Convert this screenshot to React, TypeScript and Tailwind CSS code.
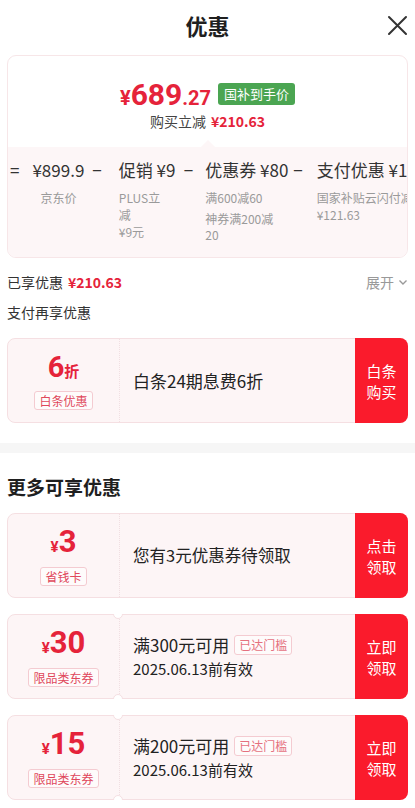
import type { ReactNode } from 'react'

function Tag({ children, className = '' }: { children: ReactNode; className?: string }) {
  return (
    <span
      className={`inline-block rounded-[3px] border border-[#f4cbd1] bg-white/60 px-[4px] text-[12px] leading-[17px] text-[#e0485b] ${className}`}
    >
      {children}
    </span>
  )
}

interface CouponProps {
  left: ReactNode
  middle: ReactNode
  action: [string, string]
  notch?: boolean
}

function Coupon({ left, middle, action, notch }: CouponProps) {
  return (
    <div className="relative mx-[7px] h-[85px] overflow-hidden">
      <div className="flex h-full rounded-[8px] border border-[#f5dfe2] bg-[#fdf5f6]">
        <div className="flex w-[112px] flex-col items-center justify-center gap-[6px] border-r border-dotted border-[#f1dfe2] pt-[2px]">
          {left}
        </div>
        <div className="flex flex-1 flex-col justify-center pl-[13px]">{middle}</div>
        <div className="-my-px -mr-px flex w-[53px] flex-col items-center justify-center rounded-r-[8px] bg-[#fa1b2c] text-[15px] leading-[21px] text-white">
          <span>{action[0]}</span>
          <span>{action[1]}</span>
        </div>
      </div>
      {notch && (
        <>
          <span className="absolute -top-[5px] left-[106px] h-[10px] w-[10px] rounded-full border border-[#f5dfe2] bg-white" />
          <span className="absolute -bottom-[5px] left-[106px] h-[10px] w-[10px] rounded-full border border-[#f5dfe2] bg-white" />
        </>
      )}
    </div>
  )
}

function Amount({ value }: { value: string }) {
  return (
    <div className="flex items-baseline font-['Roboto',sans-serif] font-bold leading-[28px] text-[#e5233a]">
      <span className="text-[15px]">¥</span>
      <span className="text-[31px]">{value}</span>
    </div>
  )
}

function Dash() {
  return <span className="w-[10px] text-center">−</span>
}

export default function App() {
  return (
    <div className="h-[808px] w-[415px] overflow-hidden bg-white font-['Noto_Sans_CJK_SC',sans-serif] text-[#333]">
      {/* header */}
      <div className="relative flex h-[50px] items-center justify-center">
        <span className="text-[22px] font-bold text-[#1f1f1f]">优惠</span>
        <svg className="absolute right-[7px] top-[15px]" width="21" height="21" viewBox="0 0 21 21">
          <path d="M2 2 L19 19 M19 2 L2 19" stroke="#333" strokeWidth="2" strokeLinecap="round" />
        </svg>
      </div>

      {/* price summary card */}
      <div className="mx-[7px] mt-[5px] overflow-hidden rounded-[9px] border border-[#f7e6e8]">
        <div className="flex h-[91px] flex-col items-center pt-[21px]">
          <div className="flex h-[34px] items-center">
            <span className="flex items-baseline font-['Roboto',sans-serif] font-bold text-[#e5233a]">
              <span className="text-[20px]">¥</span>
              <span className="text-[30px]">689</span>
              <span className="text-[20px]">.27</span>
            </span>
            <span className="ml-[7px] rounded-[3px] bg-[#4ba552] px-[6px] text-[13px] leading-[22px] text-white">
              国补到手价
            </span>
          </div>
          <div className="flex h-[20px] items-center text-[14px]">
            <span className="text-[#444]">购买立减</span>
            <span className="ml-[5px] font-semibold text-[#e5233a]">¥210.63</span>
          </div>
        </div>
        <div className="relative h-[110px] bg-[#fdf6f7] pt-[11px]">
          <span className="absolute -top-[5px] left-[195px] h-[10px] w-[10px] rotate-45 bg-[#fdf6f7]" />
          <div className="flex items-start whitespace-nowrap pl-[2px] text-[17px] leading-[24px]">
            <span className="w-[10px] text-center">=</span>
            <div className="ml-[13px] flex w-[52px] flex-col items-center">
              <span>¥899.9</span>
              <span className="mt-[7px] text-[12px] leading-[18px] text-[#9a9a9a]">京东价</span>
            </div>
            <span className="ml-[8px]"><Dash /></span>
            <div className="ml-[17px] flex w-[56px] flex-col">
              <span>促销 ¥9</span>
              <span className="mt-[7px] text-[12px] leading-[17px] text-[#9a9a9a]">
                PLUS立
                <br />
                减
                <br />
                ¥9元
              </span>
            </div>
            <span className="ml-[9px]"><Dash /></span>
            <div className="ml-[12px] flex w-[80px] flex-col">
              <span>优惠券 ¥80</span>
              <span className="mt-[7px] text-[12px] leading-[18px] text-[#9a9a9a]">满600减60</span>
              <span className="mt-[4px] text-[12px] leading-[16px] text-[#9a9a9a]">
                神券满200减
                <br />
                20
              </span>
            </div>
            <span className="ml-[8px]"><Dash /></span>
            <div className="ml-[14px] flex flex-col">
              <span>支付优惠 ¥121.63</span>
              <span className="mt-[7px] text-[12px] leading-[17px] text-[#9a9a9a]">
                国家补贴云闪付减
                <br />
                ¥121.63
              </span>
            </div>
          </div>
        </div>
      </div>

      {/* savings row */}
      <div className="mt-[14px] flex h-[20px] items-center justify-between px-[7px] text-[14px]">
        <div className="flex items-center">
          <span>已享优惠</span>
          <span className="ml-[5px] font-semibold text-[#e5233a]">¥210.63</span>
        </div>
        <div className="flex items-center text-[#999]">
          <span>展开</span>
          <svg className="ml-[4px]" width="10" height="10" viewBox="0 0 10 10">
            <path d="M1.5 3.5 L5 7 L8.5 3.5" stroke="#999" strokeWidth="1.4" fill="none" />
          </svg>
        </div>
      </div>
      <div className="mt-[10px] flex h-[20px] items-center px-[7px] text-[14px]">支付再享优惠</div>

      <div className="mt-[16px]">
        <Coupon
          left={
            <>
              <div className="flex items-baseline font-bold leading-[28px] text-[#e5233a]">
                <span className="font-['Roboto',sans-serif] text-[29px]">6</span>
                <span className="text-[15px]">折</span>
              </div>
              <Tag>白条优惠</Tag>
            </>
          }
          middle={<span className="text-[17px] text-[#222]">白条24期息费6折</span>}
          action={['白条', '购买']}
        />
      </div>

      <div className="mt-[20px] h-[10px] bg-[#f6f6f6]" />

      <div className="mt-[22px] flex h-[24px] items-center px-[7px] text-[19px] font-bold text-[#1f1f1f]">
        更多可享优惠
      </div>

      <div className="mt-[14px] flex flex-col gap-[16px]">
        <Coupon
          left={
            <>
              <Amount value="3" />
              <Tag>省钱卡</Tag>
            </>
          }
          middle={<span className="text-[16.5px] text-[#222]">您有3元优惠券待领取</span>}
          action={['点击', '领取']}
        />
        <Coupon
          notch
          left={
            <>
              <Amount value="30" />
              <Tag>限品类东券</Tag>
            </>
          }
          middle={
            <>
              <div className="flex items-center">
                <span className="text-[17px] leading-[22px] text-[#222]">满300元可用</span>
                <Tag className="ml-[5px] leading-[18px] text-[#e5707e]">已达门槛</Tag>
              </div>
              <span className="mt-[3px] text-[15px] leading-[20px] text-[#222]">2025.06.13前有效</span>
            </>
          }
          action={['立即', '领取']}
        />
        <Coupon
          notch
          left={
            <>
              <Amount value="15" />
              <Tag>限品类东券</Tag>
            </>
          }
          middle={
            <>
              <div className="flex items-center">
                <span className="text-[17px] leading-[22px] text-[#222]">满200元可用</span>
                <Tag className="ml-[5px] leading-[18px] text-[#e5707e]">已达门槛</Tag>
              </div>
              <span className="mt-[3px] text-[15px] leading-[20px] text-[#222]">2025.06.13前有效</span>
            </>
          }
          action={['立即', '领取']}
        />
      </div>
    </div>
  )
}
